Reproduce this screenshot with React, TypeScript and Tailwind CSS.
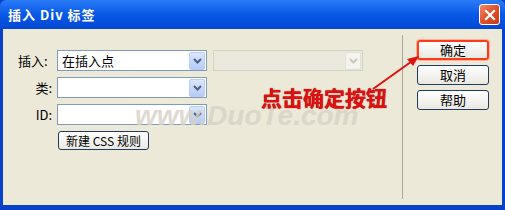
import React from 'react';

const font = { fontFamily: '"Noto Sans CJK SC", "DejaVu Sans", sans-serif' };

const Chevron: React.FC<{ disabled?: boolean }> = ({ disabled }) => (
  <div
    className={`w-[16px] h-[18px] flex items-center justify-center rounded-[2px] border ${
      disabled ? 'bg-[#f4f3ee] border-[#e3e1d6]' : 'bg-gradient-to-b from-[#dbe6fd] to-[#b6cbf7] border-[#b9cdf5]'
    }`}
  >
    <svg width="9" height="6" viewBox="0 0 9 6">
      <path d="M1 1 L4.5 4.5 L8 1" fill="none" stroke={disabled ? '#c9c7ba' : '#4d6185'} strokeWidth="2" />
    </svg>
  </div>
);

const Select: React.FC<{ value?: string; disabled?: boolean }> = ({ value, disabled }) => (
  <div
    className={`w-[150px] h-[21px] border flex items-center justify-between pl-[4px] pr-[1px] ${
      disabled ? 'bg-[#ebe9dd] border-[#d5d2c4]' : 'bg-white border-[#7f9db9]'
    }`}
  >
    <span className="text-[13px] text-black leading-none">{value}</span>
    <Chevron disabled={disabled} />
  </div>
);

const XpButton: React.FC<{ label: string; focus?: boolean }> = ({ label, focus }) => (
  <div
    className={`w-[72px] h-[20px] rounded-[3px] flex items-center justify-center text-[13px] text-black bg-gradient-to-b from-white to-[#e9e8e1] ${
      focus ? 'border-2 border-[#ff3a1a] shadow-[0_0_0_1px_#ffb0a0]' : 'border border-[#1f3b5e]'
    }`}
  >
    {label}
  </div>
);

export default function App() {
  return (
    <div className="w-[505px] h-[210px] bg-[#0842c8] flex flex-col overflow-hidden" style={font}>
      <div className="h-[29px] shrink-0 bg-gradient-to-b from-[#2a7bf7] via-[#0858e6] to-[#0448d4] flex items-center justify-between pl-[8px] pr-[5px] rounded-t-[6px]">
        <span className="text-white font-bold text-[13px] tracking-[1px]" style={{ fontFamily: '"Noto Sans CJK SC", "DejaVu Serif", serif' }}>
          插入 Div 标签
        </span>
        <div className="w-[21px] h-[21px] rounded-[3px] border border-white bg-gradient-to-br from-[#f08a6a] via-[#e0502a] to-[#c83818] flex items-center justify-center">
          <svg width="12" height="12" viewBox="0 0 12 12">
            <path d="M2 2 L10 10 M10 2 L2 10" stroke="white" strokeWidth="2.2" strokeLinecap="square" />
          </svg>
        </div>
      </div>
      <div className="relative flex-1 mx-[3px] mb-[5px] bg-[#ece9d8] flex">
        <div className="flex-1 flex flex-col gap-[6px] pt-[21px] pl-[15px]">
          <div className="flex items-center">
            <span className="w-[39px] text-[13px] text-black">插入:</span>
            <Select value="在插入点" />
            <div className="ml-[6px]">
              <Select disabled />
            </div>
          </div>
          <div className="flex items-center">
            <span className="w-[39px] text-[13px] text-black text-right pr-[5px]">类:</span>
            <Select />
          </div>
          <div className="flex items-center">
            <span className="w-[39px] text-[13px] text-black text-right pr-[5px]">ID:</span>
            <Select />
          </div>
          <div className="pl-[40px]">
            <div className="w-[91px] h-[19px] rounded-[3px] border border-[#1f3b5e] bg-gradient-to-b from-white to-[#e9e8e1] flex items-center justify-center text-[12px] text-black">
              新建 CSS 规则
            </div>
          </div>
        </div>
        <div className="w-[1px] bg-[#aca899] my-[6px] mr-[14px]" />
        <div className="w-[85px] flex flex-col gap-[5px] pt-[11px]">
          <XpButton label="确定" focus />
          <XpButton label="取消" />
          <XpButton label="帮助" />
        </div>

        <span className="absolute left-[132px] top-[66px] text-[28px] italic font-bold text-[#d6d2c6] opacity-80 pointer-events-none" style={{ fontFamily: '"Liberation Sans", sans-serif' }}>
          www.DuoTe.com
        </span>
        <span className="absolute left-[258px] top-[58px] text-[21px] font-bold text-[#e01010] leading-none" style={{ textShadow: '0 0 1px #7a0000' }}>
          点击确定按钮
        </span>
        <svg className="absolute left-[360px] top-[20px]" width="60" height="45" viewBox="0 0 60 45">
          <path d="M10 40 L52 10" stroke="#e01010" strokeWidth="2" />
          <path d="M56 7 L44 10 L50 17 Z" fill="#e01010" />
        </svg>
      </div>
    </div>
  );
}
